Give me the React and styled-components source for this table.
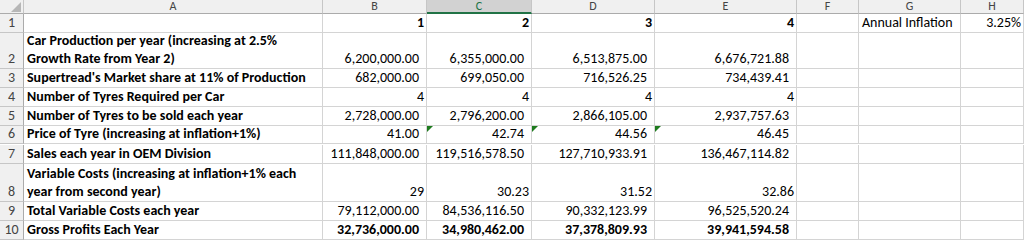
import React from "react";
import styled, { createGlobalStyle, css } from "styled-components";

const GlobalStyle = createGlobalStyle`
  html, body {
    margin: 0;
    padding: 0;
    background: #ffffff;
  }
  body {
    font-family: Carlito, Calibri, Lato, "Liberation Sans", sans-serif;
    overflow: hidden;
  }
`;

const COLS = ["A", "B", "C", "D", "E", "F", "G", "H"];

// each row: label in A, four values B..E, then F empty, G text, H value
const ROWS = [
  { n: 1, h: 19, label: "", vals: ["1", "2", "3", "4"], bold: true, g: "Annual Inflation", hv: "3.25%" },
  { n: 2, h: 36, label: "Car Production per year (increasing at 2.5% Growth Rate from Year 2)", vals: ["6,200,000.00", "6,355,000.00", "6,513,875.00", "6,676,721.88"], pad: true },
  { n: 3, h: 19, label: "Supertread's Market share at 11% of Production", vals: ["682,000.00", "699,050.00", "716,526.25", "734,439.41"], pad: true },
  { n: 4, h: 19, label: "Number of Tyres Required per Car", vals: ["4", "4", "4", "4"] },
  { n: 5, h: 19, label: "Number of Tyres to be sold each year", vals: ["2,728,000.00", "2,796,200.00", "2,866,105.00", "2,937,757.63"], pad: true },
  { n: 6, h: 18, label: "Price of Tyre (increasing at inflation+1%)", vals: ["41.00", "42.74", "44.56", "46.45"], pad: true, flags: [false, true, true, true] },
  { n: 7, h: 19, label: "Sales each year in OEM Division", vals: ["111,848,000.00", "119,516,578.50", "127,710,933.91", "136,467,114.82"], pad: true },
  { n: 8, h: 38, label: "Variable Costs (increasing at inflation+1% each year from second year)", vals: ["29", "30.23", "31.52", "32.86"] },
  { n: 9, h: 19, label: "Total Variable Costs each year", vals: ["79,112,000.00", "84,536,116.50", "90,332,123.99", "96,525,520.24"], pad: true },
  { n: 10, h: 19, label: "Gross Profits Each Year", vals: ["32,736,000.00", "34,980,462.00", "37,378,809.93", "39,941,594.58"], pad: true, bold: true },
];

const App = () => {
  return (
    <>
      <GlobalStyle />
      <Sheet>
        <Corner>
          <svg width="10" height="10" viewBox="0 0 10 10">
            <polygon points="10,0 10,10 0,10" fill="#b7b7b7" />
          </svg>
        </Corner>
        {COLS.map((c) => (
          <ColHead key={c} $active={c === "C"}>
            {c}
          </ColHead>
        ))}
        {ROWS.map((r) => (
          <Row key={r.n} $h={r.h}>
            <RowHead>{r.n}</RowHead>
            <Label>{r.label}</Label>
            {r.vals.map((v, i) => (
              <Num key={i} $pad={r.pad} $bold={r.bold}>
                {r.flags && r.flags[i] && <Flag />}
                {v}
              </Num>
            ))}
            <Cell />
            <Text>{r.g}</Text>
            <Num>{r.hv}</Num>
          </Row>
        ))}
      </Sheet>
    </>
  );
};

export default App;

const Sheet = styled.div`
  display: grid;
  grid-template-columns: 24px 299px 104px 105px 123px 142px 62px 102px 63px;
  grid-template-rows: 14px;
  grid-auto-rows: auto;
  width: 1024px;
  height: 240px;
  overflow: hidden;
  color: #000;
  font-size: 14px;
`;

const Corner = styled.div`
  box-sizing: border-box;
  background: #f0f0f0;
  border-right: 1px solid #c6c6c6;
  border-bottom: 1px solid #ababab;
  display: flex;
  align-items: flex-end;
  justify-content: flex-end;
  padding: 1px 2px;
`;

const ColHead = styled.div`
  box-sizing: border-box;
  background: ${(p) => (p.$active ? "#d2d2d2" : "#f0f0f0")};
  color: ${(p) => (p.$active ? "#217346" : "#444")};
  border-right: 1px solid #c6c6c6;
  border-bottom: ${(p) => (p.$active ? "2px solid #217346" : "1px solid #ababab")};
  font-size: 12px;
  line-height: 12px;
  text-align: center;
`;

const Row = styled.div`
  display: contents;
  & > * {
    height: ${(p) => p.$h}px;
  }
`;

const cellBase = css`
  box-sizing: border-box;
  border-right: 1px solid #d4d4d4;
  border-bottom: 1px solid #d4d4d4;
  display: flex;
  align-items: flex-end;
  line-height: 18px;
  overflow: hidden;
  white-space: nowrap;
  position: relative;
`;

const RowHead = styled.div`
  ${cellBase};
  background: #f0f0f0;
  color: #444;
  justify-content: center;
  border-right: 1px solid #ababab;
  border-bottom: 1px solid #c6c6c6;
`;

const Cell = styled.div`
  ${cellBase};
`;

const Label = styled.div`
  ${cellBase};
  font-weight: 700;
  padding-left: 3px;
  white-space: normal;
`;

const Text = styled.div`
  ${cellBase};
  padding-left: 3px;
`;

const Num = styled.div`
  ${cellBase};
  justify-content: flex-end;
  padding-right: ${(p) => (p.$pad ? 7 : 2)}px;
  font-weight: ${(p) => (p.$bold ? 700 : 400)};
`;

const Flag = styled.span`
  position: absolute;
  left: 0;
  top: 0;
  width: 0;
  height: 0;
  border-top: 6px solid #1e7b1e;
  border-right: 6px solid transparent;
`;
